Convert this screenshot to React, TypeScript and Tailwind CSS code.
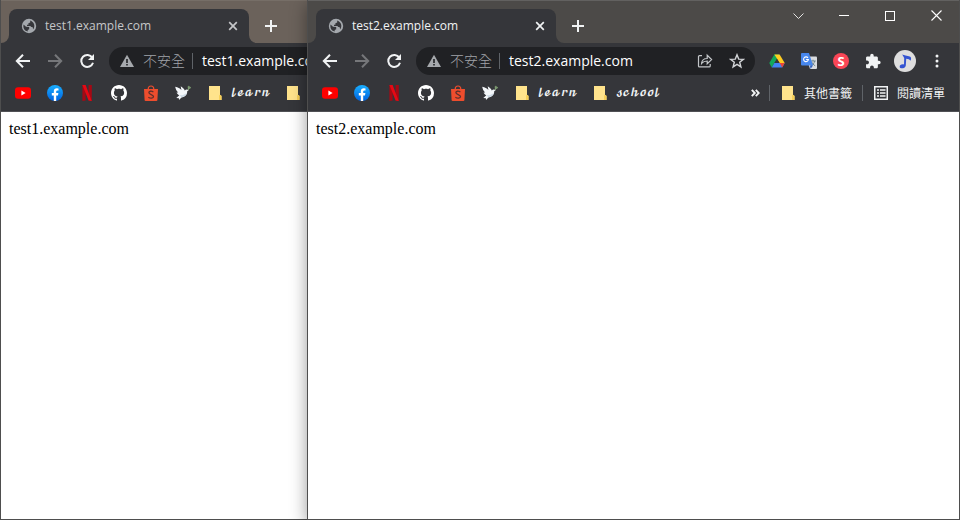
import type { ReactNode } from "react";

const uiFont = "font-['Open_Sans','Noto_Sans_CJK_TC',sans-serif]";

function Cell({ children }: { children: ReactNode }) {
  return <div className="flex h-8 w-8 shrink-0 items-center justify-center">{children}</div>;
}

function Globe() {
  return (
    <svg className="h-4 w-4 shrink-0" viewBox="0 0 16 16">
      <circle cx="8" cy="8" r="7.200" fill="#a4a8ad" />
      <path d="M2.500 6.600 5 8.700 8.200 9v2.200L6.700 12v1.500C3.600 13 1.900 10.500 2.500 6.600Z" fill="#35363a" />
      <path d="M9.200 2.600v1.900L7.400 5.200v1.500H6v1.200h3.300l1 1.200h1.200l.7 2.200C14.300 9 13.600 4 9.200 2.600Z" fill="#35363a" />
    </svg>
  );
}

function Back({ color, flip }: { color: string; flip?: boolean }) {
  return (
    <svg className={flip ? "h-4 w-4 -scale-x-100" : "h-4 w-4"} viewBox="0 0 16 16" fill="none" stroke={color} strokeWidth="2">
      <path d="M15 8H2.5M8 1.700 1.800 8 8 14.300" />
    </svg>
  );
}

function Reload() {
  return (
    <svg className="h-4 w-4" viewBox="0 0 16 16">
      <path d="M13.300 4.600A6 6 0 1 0 14 9.700" fill="none" stroke="#f1f3f4" strokeWidth="2" />
      <path d="M15 1v6H9Z" fill="#f1f3f4" />
    </svg>
  );
}

function Youtube() {
  return (
    <svg className="h-4 w-4" viewBox="0 0 16 16">
      <rect y="2.300" width="16" height="11.400" rx="3" fill="#f00" />
      <path d="m6.400 5.600 4.200 2.400-4.200 2.400Z" fill="#fff" />
    </svg>
  );
}

function Facebook() {
  return (
    <svg className="h-4 w-4" viewBox="0 0 16 16">
      <defs>
        <linearGradient id="fb" x1="0" y1="0" x2="0" y2="1">
          <stop offset="0" stopColor="#19afff" />
          <stop offset="1" stopColor="#0062e0" />
        </linearGradient>
      </defs>
      <circle cx="8" cy="8" r="8" fill="url(#fb)" />
      <path d="M6.800 16v-5.600h-2V8h2V6.400c0-2.100 1.200-3.200 3-3.200l1.700.2v2h-1C9.500 5.400 9.200 6 9.200 6.600V8h2.200l-.4 2.400H9.200V16Z" fill="#fff" />
    </svg>
  );
}

function Netflix() {
  return (
    <svg className="h-4 w-4" viewBox="0 0 16 16">
      <path d="M3.400 0h3.200v15.600l-3.200.4ZM9.600 0h3.200v16l-3.200-.4Z" fill="#a50914" />
      <path d="M3.400 0h3.200l6.200 16-3.200-.5Z" fill="#e50914" />
    </svg>
  );
}

function Github() {
  return (
    <svg className="h-4 w-4" viewBox="0 0 16 16" fill="#fff">
      <path d="M8 0C3.58 0 0 3.58 0 8c0 3.54 2.29 6.53 5.47 7.59.4.07.55-.17.55-.38 0-.19-.01-.82-.01-1.49-2.01.37-2.53-.49-2.69-.94-.09-.23-.48-.94-.82-1.13-.28-.15-.68-.52-.01-.53.63-.01 1.08.58 1.23.82.72 1.21 1.87.87 2.33.66.07-.52.28-.87.51-1.07-1.78-.2-3.64-.89-3.64-3.95 0-.87.31-1.59.82-2.15-.08-.2-.36-1.02.08-2.12 0 0 .67-.21 2.2.82.64-.18 1.32-.27 2-.27s1.36.09 2 .27c1.53-1.04 2.2-.82 2.2-.82.44 1.1.16 1.92.08 2.12.51.56.82 1.27.82 2.15 0 3.07-1.87 3.75-3.65 3.95.29.25.54.73.54 1.48 0 1.07-.01 1.93-.01 2.2 0 .21.15.46.55.38A8.01 8.01 0 0 0 16 8c0-4.42-3.58-8-8-8Z" />
    </svg>
  );
}

function Shopee() {
  return (
    <svg className="h-4 w-4" viewBox="0 0 16 16" fill="none">
      <path d="M1 4h14l-.6 11a1 1 0 0 1-1 1H2.600a1 1 0 0 1-1-1Z" fill="#ee4d2d" />
      <path d="M5.200 4c.1-4 5.500-4 5.600 0" stroke="#ee4d2d" strokeWidth="1.200" />
      <path d="M10.400 7C8.500 5.700 5.800 6 5.900 7.800c.2 2 4.600 1.500 4.600 3.700 0 2-3.200 2.200-5.100.7" stroke="#5c302d" strokeWidth="1.300" />
    </svg>
  );
}

function Dove() {
  return (
    <svg className="h-4 w-4" viewBox="0 0 16 16">
      <path d="M.2 1.800C3 2.600 4.900 3.200 6.400 5L5.700 1.200c2 1.200 3.400 2.500 4.100 4.200 1-1.100 2.500-1.300 4-.4l-1.600 1.200c.1 3.500-2.200 5.800-5.700 6.200L4 15l-.1-1.700-2.600-.2 3-2.900C2.900 9.500 2 8.600 1.600 7.400l1.600.2C1.500 6 .6 4 .2 1.800Z" fill="#f4f7fa" />
      <path d="M4.600 10.200c2.800.4 5.200-.4 7.300-2.700-.6 2.700-2.400 4.400-5.500 4.700Z" fill="#cddbe7" />
      <path d="m13.200 5.200.9-4.400M14 3.400l1.800-1M13.900 2.500l-1.200-.7" stroke="#7d9b72" strokeWidth="1.300" />
    </svg>
  );
}

function Folder() {
  return (
    <svg className="h-[14px] w-[13px] shrink-0" viewBox="0 0 13 14">
      <path d="M0 0h11v9l1.500 1v4H0Z" fill="#ffe38c" />
      <path d="M10 14v-4.500L11 8.800l1.500 1V14Z" fill="#f7cf58" />
    </svg>
  );
}

function Warning() {
  return (
    <svg className="h-[14px] w-[14px] shrink-0" viewBox="0 0 14 14">
      <path d="M7 .7 14 13H0Z" fill="#a6a9ad" />
      <path d="M6.200 5h1.600v4H6.200Zm0 5h1.600v1.600H6.200Z" fill="#202124" />
    </svg>
  );
}

function Share() {
  return (
    <svg className="h-4 w-4" viewBox="0 0 16 16" fill="none" stroke="#c3c6c9" strokeWidth="1.200">
      <path d="M5 2.600H2.500a1 1 0 0 0-1 1v9.300a1 1 0 0 0 1 1h9.700a1 1 0 0 0 1-1v-2" />
      <path d="M4.600 10.500c.3-3.300 2-5 5.600-5V2.300L14.600 6.600l-4.400 4.200V8C7.700 8 6 8.700 4.600 10.500Z" />
    </svg>
  );
}

function Star() {
  return (
    <svg className="h-4 w-4" viewBox="0 0 16 16" fill="none" stroke="#d2d4d7" strokeWidth="1.400">
      <path d="m8 1.800 1.700 4.300 4.600.3-3.600 2.900 1.200 4.600L8 11.400l-3.900 2.500 1.200-4.600-3.600-2.900 4.600-.3Z" />
    </svg>
  );
}

function Drive() {
  return (
    <svg className="h-[14px] w-4" viewBox="0 0 16 14">
      <path d="M5.300.5h5L5.400 9 2.700 13.500.3 9Z" fill="#12a85a" />
      <path d="M5.400.5h5.200L15.700 9h-5Z" fill="#ffcc22" />
      <path d="M5.400 9h10.300l-2.500 4.500H2.700Z" fill="#4285f4" />
      <path d="M10.700 9h5l-2.500 4.500Z" fill="#ed4536" />
      <path d="M8 4.900 10.400 9H5.600Z" fill="#35363a" />
    </svg>
  );
}

function Translate() {
  return (
    <svg className="h-4 w-4" viewBox="0 0 16 16" fill="none">
      <path d="M5 3.500h10a1 1 0 0 1 1 1V15a1 1 0 0 1-1 1H9Z" fill="#d9dcdf" />
      <path d="M9.500 8h5.300M12 6.700V8m1.700 0c-.5 2.200-1.700 3.700-3.500 4.700m.5-3.700c.7 1.500 1.700 2.700 3.500 3.800" stroke="#687f86" strokeWidth=".9" />
      <path d="M1 0h7l4 12.600H1a1 1 0 0 1-1-1V1a1 1 0 0 1 1-1Z" fill="#4787ed" />
      <path d="M9 12.600h3L9.500 16Z" fill="#3261bd" />
      <path d="M7 4.900A2.400 2.400 0 1 0 7.400 6.500H5.100" stroke="#fff" strokeWidth="1.100" />
    </svg>
  );
}

function Puzzle() {
  return (
    <svg className="h-4 w-4" viewBox="1 0 22 23" fill="#f1f3f4">
      <path d="M20.500 11H19V7c0-1.100-.9-2-2-2h-4V3.500a2.500 2.500 0 0 0-5 0V5H4c-1.100 0-1.990.9-1.990 2v3.800H3.500c1.490 0 2.700 1.210 2.700 2.700s-1.210 2.700-2.700 2.700H2V20c0 1.100.9 2 2 2h3.800v-1.500c0-1.490 1.210-2.700 2.700-2.700s2.700 1.210 2.700 2.700V22H17c1.100 0 2-.9 2-2v-4h1.500a2.500 2.500 0 0 0 0-5Z" />
    </svg>
  );
}

function Avatar() {
  return (
    <svg className="h-[22px] w-[22px] shrink-0" viewBox="0 0 22 22">
      <circle cx="11" cy="11" r="11" fill="#dedede" />
      <path d="M8.200 4.500c2.200.9 4.500 1.500 6.700 1.800 2.300.4 2.900 2.200 1.500 4.500-.5-1.400-2.300-1.900-4.200-2.100l-.4 6.700c-.3 2.800-5.600 4.200-6.100 1.500-.3-2 2-3.100 4.300-2.500L10.200 8Z" fill="#3454d1" />
    </svg>
  );
}

function ReadingList() {
  return (
    <svg className="h-[14px] w-[14px] shrink-0" viewBox="0 0 14 14" stroke="#f1f3f4" fill="none">
      <rect x=".75" y=".75" width="12.500" height="12.500" strokeWidth="1.500" />
      <path d="M3 4h2M6 4h5.500M3 7h2M6 7h5.500M3 10h2M6 10h5.500" strokeWidth="1.500" />
    </svg>
  );
}

function ScriptFolder({ label }: { label: string }) {
  return (
    <div className="flex w-[78px] shrink-0 items-center gap-[9px] font-['DejaVu_Math_TeX_Gyre',serif] leading-4">
      <Folder />
      <span className="inline-block origin-left scale-x-[0.86] text-[11px] tracking-[0px]">{label}</span>
    </div>
  );
}

type WindowProps = { host: string; active: boolean };

function BrowserWindow({ host, active }: WindowProps) {
  return (
    <div className="flex h-full flex-col border border-t-0 border-[#4e4e4e] bg-white">
      <div className={`flex h-[43px] shrink-0 border-t ${active ? "border-[#626160] bg-[#4c4a48]" : "border-[#766e67] bg-[#6b625b]"}`}>
        <div className="flex w-2 shrink-0 items-end bg-[#35363a]">
          <div className={`h-full w-2 rounded-br-lg ${active ? "bg-[#4c4a48]" : "bg-[#6b625b]"}`} />
        </div>
        <div className={`mt-2 flex h-[34px] w-60 shrink-0 items-center rounded-t-lg bg-[#35363a] pr-[11px] pl-3 ${uiFont}`}>
          <Globe />
          <span className={`ml-2 flex-1 text-[12px] ${active ? "text-[#f1f3f4]" : "text-[#c5c6c8]"}`}>{host}</span>
          <svg className="h-[10px] w-[10px]" viewBox="0 0 10 10" stroke={active ? "#f1f3f4" : "#c5c6c8"} strokeWidth="1.700">
            <path d="m1.200 1.200 7.600 7.600m0-7.600L1.200 8.800" />
          </svg>
        </div>
        <div className="mt-2 flex h-[34px] flex-1 bg-[#35363a]">
          <div className={`-mt-2 flex flex-1 items-center rounded-bl-lg pl-4 ${active ? "bg-[#4c4a48]" : "bg-[#6b625b]"}`}>
            <svg className="mt-2 h-3 w-3" viewBox="0 0 12 12" stroke="#f1f3f4" strokeWidth="2">
              <path d="M6 0v12M0 6h12" />
            </svg>
            {active && (
              <div className="-mt-[13px] ml-auto flex items-center">
                <div className="flex w-[46px] justify-center">
                  <svg className="h-[6px] w-[11px]" viewBox="0 0 11 6" fill="none" stroke="#e2e2e1">
                    <path d="m.5.5 5 5 5-5" />
                  </svg>
                </div>
                <div className="flex w-[46px] justify-center"><div className="h-px w-[10px] bg-white" /></div>
                <div className="flex w-[46px] justify-center"><div className="h-[10px] w-[10px] border border-white" /></div>
                <div className="flex w-[46px] justify-center">
                  <svg className="h-[11px] w-[11px]" viewBox="0 0 11 11" stroke="#fff" strokeWidth="1.100">
                    <path d="m.5.5 10 10m0-10-10 10" />
                  </svg>
                </div>
              </div>
            )}
          </div>
        </div>
      </div>

      <div className={`flex h-9 shrink-0 items-center bg-[#35363a] pl-[6px] ${uiFont}`}>
        <Cell><Back color="#f1f3f4" /></Cell>
        <Cell><Back color="#76777a" flip /></Cell>
        <Cell><Reload /></Cell>
        <div className={`ml-[6px] flex h-7 shrink-0 items-center rounded-full bg-[#202124] pr-[2px] pl-[11px] ${active ? "w-[339px]" : "w-[500px]"}`}>
          <Warning />
          <span className="ml-[9px] w-[42px] shrink-0 -translate-y-px font-['Noto_Sans_CJK_TC',sans-serif] text-[14px] font-light text-[#a0a4a9]">不安全</span>
          <div className="ml-[7px] h-4 w-px shrink-0 bg-[#5f6368]" />
          <span className="ml-[9px] flex-1 -translate-y-px text-[14px] text-white">{host}</span>
          <Cell><Share /></Cell>
          <Cell><Star /></Cell>
        </div>
        {active && (
          <div className="ml-[6px] flex items-center">
            <Cell><Drive /></Cell>
            <Cell><Translate /></Cell>
            <Cell>
              <div className="flex h-4 w-4 items-center justify-center rounded-full bg-[#fa4656] text-[13px] leading-4 font-bold text-white">S</div>
            </Cell>
            <Cell><Puzzle /></Cell>
            <Cell><Avatar /></Cell>
            <Cell>
              <svg className="h-[14px] w-1" viewBox="0 0 4 14" fill="#f1f3f4">
                <circle cx="2" cy="2" r="1.500" /><circle cx="2" cy="7" r="1.500" /><circle cx="2" cy="12" r="1.500" />
              </svg>
            </Cell>
          </div>
        )}
      </div>

      <div className="flex h-[33px] shrink-0 items-center border-b border-[#505155] bg-[#35363a] pb-1 pl-[6px] text-[12px] text-[#f1f3f4]">
        <Cell><Youtube /></Cell>
        <Cell><Facebook /></Cell>
        <Cell><Netflix /></Cell>
        <Cell><Github /></Cell>
        <Cell><Shopee /></Cell>
        <Cell><Dove /></Cell>
        <div className="ml-[10px] flex">
          <ScriptFolder label="𝓵𝓮𝓪𝓻𝓷" />
          <ScriptFolder label="𝓼𝓬𝓱𝓸𝓸𝓵" />
        </div>
        {active && (
          <div className="mr-[14px] ml-auto flex items-center font-['Noto_Sans_CJK_TC',sans-serif]">
            <svg className="h-2 w-[9px]" viewBox="0 0 9 8" fill="none" stroke="#f1f3f4" strokeWidth="1.900">
              <path d="m.8.800 3 3.200-3 3.200m4-6.400 3 3.200-3 3.200" />
            </svg>
            <div className="ml-[9px] h-4 w-px bg-[#5f6368]" />
            <div className="ml-3 flex items-center gap-[9px]"><Folder /><span className="w-12 whitespace-nowrap">其他書籤</span></div>
            <div className="ml-[10px] h-4 w-px bg-[#5f6368]" />
            <div className="ml-[11px] flex items-center gap-[9px]"><ReadingList /><span className="w-12 whitespace-nowrap">閱讀清單</span></div>
          </div>
        )}
      </div>

      <div className="flex-1 p-2 font-['Liberation_Serif',serif] text-[16px] leading-[18px] text-black">{host}</div>
    </div>
  );
}

export default function App() {
  return (
    <div className="relative h-[520px] w-[960px] overflow-hidden bg-white">
      <div className="absolute top-0 left-0 h-[520px] w-[400px] overflow-hidden">
        <BrowserWindow host="test1.example.com" active={false} />
      </div>
      <div className="absolute top-0 left-[307px] h-[520px] w-[653px] shadow-[0_4px_16px_rgba(0,0,0,0.4)]">
        <BrowserWindow host="test2.example.com" active />
      </div>
    </div>
  );
}
